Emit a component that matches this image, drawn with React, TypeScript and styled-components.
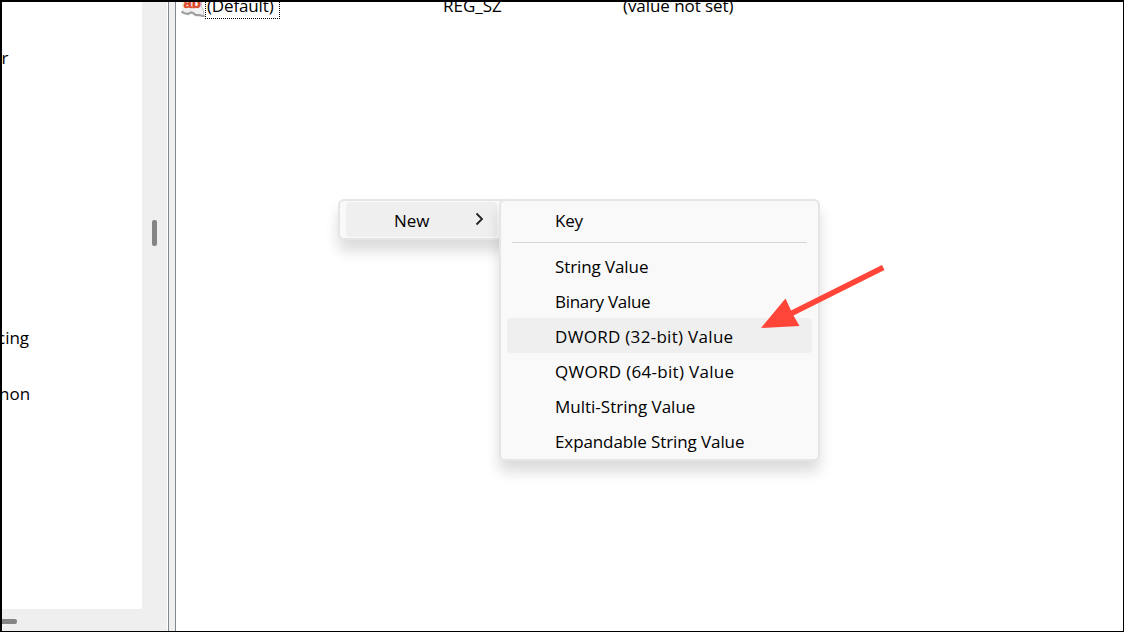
import styled, { createGlobalStyle } from 'styled-components'

const GlobalStyle = createGlobalStyle`
  * {
    box-sizing: border-box;
  }
  body {
    margin: 0;
    overflow: hidden;
    background: #fff;
    color: #000;
    font-family: 'Open Sans', 'Noto Sans', sans-serif;
    font-size: 17px;
  }
`

const Window = styled.main`
  position: relative;
  display: flex;
  width: 1124px;
  height: 632px;
  overflow: hidden;
  border: solid #000;
  border-width: 2px 1px 1px 2px;
`

const TreePane = styled.aside`
  display: grid;
  grid-template: 607px 22px / 140px 25px;
  flex: none;
  width: 165px;
  background: #efefef;
`

const Tree = styled.div`
  padding-top: 42px;
  overflow: hidden;
  background: #fff;
  border-bottom-right-radius: 2px;
`

const TreeRow = styled.div<{ $shift: number }>`
  height: 28px;
  line-height: 28px;
  text-indent: ${({ $shift }) => $shift}px;
  white-space: nowrap;
`

const VerticalTrack = styled.div`
  display: flex;
  justify-content: center;
  padding-top: 218px;
`

const HorizontalTrack = styled.div`
  display: flex;
  align-items: center;
  padding-top: 2px;
`

const Thumb = styled.div<{ $vertical?: boolean }>`
  width: ${({ $vertical }) => ($vertical ? 5 : 15)}px;
  height: ${({ $vertical }) => ($vertical ? 26 : 5)}px;
  border-radius: ${({ $vertical }) => ($vertical ? '2px' : '0 2px 2px 0')};
  background: #858585;
`

const Splitter = styled.div`
  flex: none;
  width: 8px;
  margin-left: 1px;
  border: solid #828790;
  border-width: 0 1px;
  background: #f0f0f0;
`

const ValueList = styled.section`
  flex: 1;
  overflow: hidden;
`

const ValueRow = styled.div`
  display: grid;
  grid-template-columns: 267px 180px 1fr;
  height: 28px;
  margin-top: -10px;
  line-height: 27px;
  white-space: nowrap;
`

const NameCell = styled.div`
  display: flex;
  padding-left: 4px;
`

const FocusedName = styled.span`
  width: 75px;
  height: 27px;
  margin-left: 1px;
  padding-left: 1px;
  border: 1px dotted #000;
  line-height: 25px;
`

const Text = styled.span<{ $spacing?: number }>`
  letter-spacing: ${({ $spacing = 0 }) => $spacing}px;
`

// menus float over the value list
const Menu = styled.div<{ $x: number; $width: number; $height: number }>`
  position: absolute;
  top: 197px;
  left: ${({ $x }) => $x}px;
  width: ${({ $width }) => $width}px;
  height: ${({ $height }) => $height}px;
  padding: 1px 6px;
  border: 2px solid #e5e5e5;
  border-radius: 6px;
  background: #f9f9f9;
  box-shadow: 0 11px 14px rgba(0, 0, 0, 0.14);
`

const MenuItem = styled.div<{ $active?: boolean }>`
  display: flex;
  align-items: center;
  height: 35px;
  padding: 2px 0 0 48px;
  border-radius: 4px;
  background: ${({ $active }) => ($active ? '#efefef' : 'transparent')};
  white-space: nowrap;
`

const RootItem = styled(MenuItem)`
  width: 151px;
`

const Chevron = styled.svg`
  margin: -4px 13px 0 auto;
`

const Divider = styled.div`
  height: 1px;
  margin: 5px 5px;
  background: #d5d5d5;
`

const Arrow = styled.svg`
  position: absolute;
  top: 262px;
  left: 758px;
`

const treeRows = [
  { text: 'r', shift: -0.5 },
  ...Array.from({ length: 9 }, () => ({ text: '', shift: 0 })),
  { text: 'cing', shift: -5 },
  { text: '', shift: 0 },
  { text: 'non', shift: -3 },
]

const valueTypes = [
  { label: 'String Value', spacing: -0.1 },
  { label: 'Binary Value', spacing: -0.3 },
  { label: 'DWORD (32-bit) Value', spacing: 0.3, active: true },
  { label: 'QWORD (64-bit) Value', spacing: 0.3 },
  { label: 'Multi-String Value', spacing: 0 },
  { label: 'Expandable String Value', spacing: -0.1 },
]

const StringIcon = () => (
  <svg width="24" height="28" viewBox="0 0 24 28" overflow="visible">
    <path d="M2 6H21L22 16L24 18V23L20 23L16 23L11 20L8 22L2 20Z" fill="#f1f1f3" />
    <path
      d="M1.5 19.5L4 21L8 22L11 20.5L13 21L16 23.2L20 23L22 24H24.5"
      fill="none"
      stroke="#a0a0a3"
      strokeWidth="2.2"
    />
    <path d="M21.5 9V15L23.5 18V23" fill="none" stroke="#c9c9cc" strokeWidth="1" />
    <text
      x="3.5"
      y="16"
      fill="#dc4726"
      stroke="#dc4726"
      strokeWidth="0.5"
      fontFamily="Liberation Sans"
      fontSize="15"
      fontWeight="700"
    >
      ab
    </text>
  </svg>
)

const App = () => {
  return (
    <>
      <GlobalStyle />
      <Window>
        <TreePane>
          <Tree>
            {treeRows.map((row, i) => (
              <TreeRow key={i} $shift={row.shift}>
                {row.text}
              </TreeRow>
            ))}
          </Tree>
          <VerticalTrack>
            <Thumb $vertical />
          </VerticalTrack>
          <HorizontalTrack>
            <Thumb />
          </HorizontalTrack>
        </TreePane>
        <Splitter />
        <ValueList>
          <ValueRow>
            <NameCell>
              <StringIcon />
              <FocusedName>
                <Text $spacing={-0.15}>(Default)</Text>
              </FocusedName>
            </NameCell>
            <Text>REG_SZ</Text>
            <Text $spacing={-0.07}>(value not set)</Text>
          </ValueRow>
        </ValueList>

        <Menu $x={336} $width={170} $height={41}>
          <RootItem $active>
            <Text>New</Text>
            <Chevron width="9" height="14" viewBox="0 0 9 14">
              <path d="M1.5 1.5L7 7L1.5 12.5" fill="none" stroke="#222" strokeWidth="1.8" />
            </Chevron>
          </RootItem>
        </Menu>

        <Menu $x={497} $width={321} $height={262}>
          <MenuItem>
            <Text $spacing={-0.2}>Key</Text>
          </MenuItem>
          <Divider />
          {valueTypes.map((item) => (
            <MenuItem key={item.label} $active={item.active}>
              <Text $spacing={item.spacing}>{item.label}</Text>
            </MenuItem>
          ))}
        </Menu>

        <Arrow width="130" height="70" viewBox="0 0 130 70">
          <path d="M1 64L25.5 34.5L31 46.5L122 1L124.5 6L33.5 51.5L39.5 62Z" fill="#ff4438" />
        </Arrow>
      </Window>
    </>
  )
}

export default App
